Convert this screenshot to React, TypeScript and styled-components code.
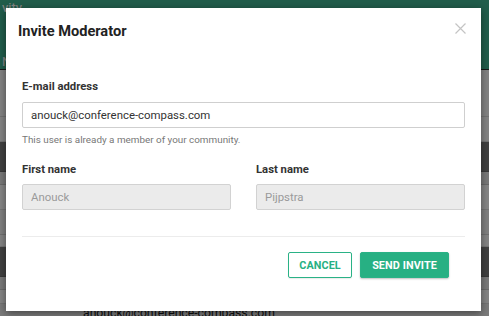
import React from 'react';
import styled, { createGlobalStyle } from 'styled-components';

const GlobalStyle = createGlobalStyle`
  html, body {
    margin: 0;
    padding: 0;
    width: 489px;
    height: 316px;
    overflow: hidden;
    font-family: Roboto, "Liberation Sans", Arial, sans-serif;
  }
  * { box-sizing: border-box; }
`;

const Page = styled.div`
  width: 489px;
  height: 316px;
  position: relative;
  background: #f2f2f2;
  overflow: hidden;
`;

const Header = styled.div`
  height: 70px;
  background: #3fb08e;
  border-bottom: 1px solid #2a2a2a;
  color: #fff;
  padding: 0 2px;
  font-size: 13px;
  display: flex;
  flex-direction: column;
  justify-content: space-between;
`;

const Band = styled.div<{ $h: number; $tone: string }>`
  height: ${p => p.$h}px;
  background: ${p => p.$tone};
  border-bottom: 1px solid rgba(0, 0, 0, 0.12);
  padding-left: 83px;
  padding-top: 3px;
  font-size: 12.2px;
  color: #1a1a1a;
  line-height: 1;
`;

const Backdrop = styled.div`
  position: absolute;
  inset: 0;
  background: rgba(0, 0, 0, 0.47);
`;

const Dialog = styled.div`
  position: absolute;
  left: 6px;
  top: 8px;
  width: 475px;
  background: #fff;
  box-shadow: 0 2px 8px rgba(0, 0, 0, 0.45);
`;

const DialogHeader = styled.div`
  height: 46px;
  padding: 0 14px 0 12px;
  display: flex;
  align-items: center;
  justify-content: space-between;
`;

const Title = styled.h2`
  margin: 0;
  font-size: 14.6px;
  font-weight: 700;
  color: #222;
`;

const Close = styled.button`
  border: 0;
  background: none;
  padding: 0;
  width: 14px;
  height: 14px;
  margin-top: -6px;
  display: flex;
  align-items: center;
  justify-content: center;
  cursor: pointer;
`;

const Body = styled.div`
  padding: 25px 16px 33px;
`;

const Label = styled.label`
  display: block;
  font-size: 11.3px;
  line-height: 16px;
  font-weight: 700;
  color: #333;
  margin-bottom: 7px;
`;

const Input = styled.input<{ $disabled?: boolean }>`
  display: block;
  width: 100%;
  height: 26px;
  border: 1px solid ${p => (p.$disabled ? '#d2d2d2' : '#cfcfcf')};
  border-radius: 2px;
  background: ${p => (p.$disabled ? '#ebebeb' : '#fff')};
  color: ${p => (p.$disabled ? '#9a9a9a' : '#333')};
  padding: 0 8px;
  font-family: inherit;
  font-size: 11.4px;
  outline: none;
`;

const Help = styled.div`
  margin-top: 5px;
  font-size: 9.9px;
  line-height: 14px;
  color: #777;
`;

const Row = styled.div`
  display: grid;
  grid-template-columns: 1fr 1fr;
  column-gap: 25px;
  margin-top: 15px;
  & ${Label} {
    margin-bottom: 6px;
  }
`;

const Divider = styled.hr`
  border: 0;
  border-top: 1px solid #ececec;
  margin: 26px 0 15px;
`;

const Actions = styled.div`
  display: flex;
  justify-content: flex-end;
  gap: 8px;
  padding-right: 16px;
`;

const Button = styled.button<{ $primary?: boolean }>`
  height: 26px;
  min-width: ${p => (p.$primary ? '89px' : '64px')};
  padding: 0 8px;
  border-radius: 2px;
  border: 1px solid #2ab286;
  background: ${p => (p.$primary ? '#27b083' : '#fff')};
  color: ${p => (p.$primary ? '#fff' : '#27b083')};
  font-family: inherit;
  font-size: 10.8px;
  font-weight: 700;
  letter-spacing: 0.1px;
  text-transform: uppercase;
  box-shadow: ${p => (p.$primary ? '0 1px 2px rgba(0,0,0,0.25)' : '0 1px 1px rgba(0,0,0,0.08)')};
  cursor: pointer;
`;

const bands: [number, string, string?][] = [
  [47, '#f7f7f7'],
  [25, '#fafafa'],
  [30, '#7a7a7a'],
  [13, '#e4e4e4'],
  [25, '#fdfdfd'],
  [25, '#f1f1f1'],
  [12, '#fafafa'],
  [30, '#7a7a7a'],
  [13, '#e4e4e4'],
  [14, '#fbfbfb'],
  [20, '#e8e8e8', 'anouck@conference-compass.com'],
];

export default function App() {
  return (
    <Page>
      <GlobalStyle />
      <Header>
        <span>vity</span>
        <span>N</span>
      </Header>
      {bands.map(([h, tone, text], i) => (
        <Band key={i} $h={h} $tone={tone}>
          {text}
        </Band>
      ))}
      <Backdrop />
      <Dialog role="dialog">
        <DialogHeader>
          <Title>Invite Moderator</Title>
          <Close aria-label="Close">
            <svg width="11" height="11" viewBox="0 0 11 11">
              <path d="M0.5 0.5L10.5 10.5M10.5 0.5L0.5 10.5" stroke="#c4c4c4" strokeWidth="1.2" />
            </svg>
          </Close>
        </DialogHeader>
        <Body>
          <Label>E-mail address</Label>
          <Input defaultValue="anouck@conference-compass.com" />
          <Help>This user is already a member of your community.</Help>
          <Row>
            <div>
              <Label>First name</Label>
              <Input $disabled disabled defaultValue="Anouck" />
            </div>
            <div>
              <Label>Last name</Label>
              <Input $disabled disabled defaultValue="Pijpstra" />
            </div>
          </Row>
          <Divider />
          <Actions>
            <Button>Cancel</Button>
            <Button $primary>Send invite</Button>
          </Actions>
        </Body>
      </Dialog>
    </Page>
  );
}
